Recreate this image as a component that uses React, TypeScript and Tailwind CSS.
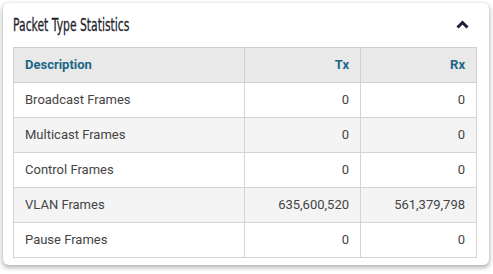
const ROWS = [
  { label: "Broadcast Frames", tx: "0", rx: "0" },
  { label: "Multicast Frames", tx: "0", rx: "0" },
  { label: "Control Frames", tx: "0", rx: "0" },
  { label: "VLAN Frames", tx: "635,600,520", rx: "561,379,798" },
  { label: "Pause Frames", tx: "0", rx: "0" },
]

export default function App() {
  return (
    <div className="h-[274px] w-[493px] bg-white pl-[3px] pt-[3px] font-['Roboto',sans-serif]">
      <div className="w-[486px] rounded-[6px] bg-white px-[10px] pb-[7px] shadow-[0_2px_4px_1px_rgba(0,0,0,0.28)]">
        {/* Header */}
        <div className="flex h-[44px] items-center justify-between pl-[0px] pr-[10px]">
          <h2 className="inline-block origin-left scale-x-[0.6] whitespace-nowrap text-[18px] leading-none text-[#1d1d2b] [-webkit-text-stroke:0.3px_#1d1d2b] font-['DejaVu_Sans',sans-serif]">
            Packet Type Statistics
          </h2>
          <svg width="13" height="9" viewBox="0 0 13 9" className="mb-[2px]">
            <polyline points="1.5,7.5 6.5,2.5 11.5,7.5" fill="none" stroke="#1a1f36" strokeWidth="3" />
          </svg>
        </div>

        {/* Table */}
        <table className="w-[464px] border-collapse text-[13px]">
          <thead>
            <tr className="h-[35px] bg-[#e9e9e9] text-[#1b6686]">
              <th className="border border-[#cfcfcf] px-[11px] text-left font-bold">Description</th>
              <th className="w-[116px] border border-[#cfcfcf] px-[11px] text-right font-bold">Tx</th>
              <th className="w-[116px] border border-[#cfcfcf] px-[11px] text-right font-bold">Rx</th>
            </tr>
          </thead>
          <tbody>
            {ROWS.map((row, i) => (
              <tr key={row.label} className={`h-[35px] text-[#444] ${i % 2 === 1 ? "bg-[#f4f4f4]" : "bg-white"}`}>
                <td className="border border-[#d4d4d4] px-[11px]">{row.label}</td>
                <td className="border border-[#d4d4d4] px-[11px] text-right">{row.tx}</td>
                <td className="border border-[#d4d4d4] px-[11px] text-right">{row.rx}</td>
              </tr>
            ))}
          </tbody>
        </table>
      </div>
    </div>
  )
}
